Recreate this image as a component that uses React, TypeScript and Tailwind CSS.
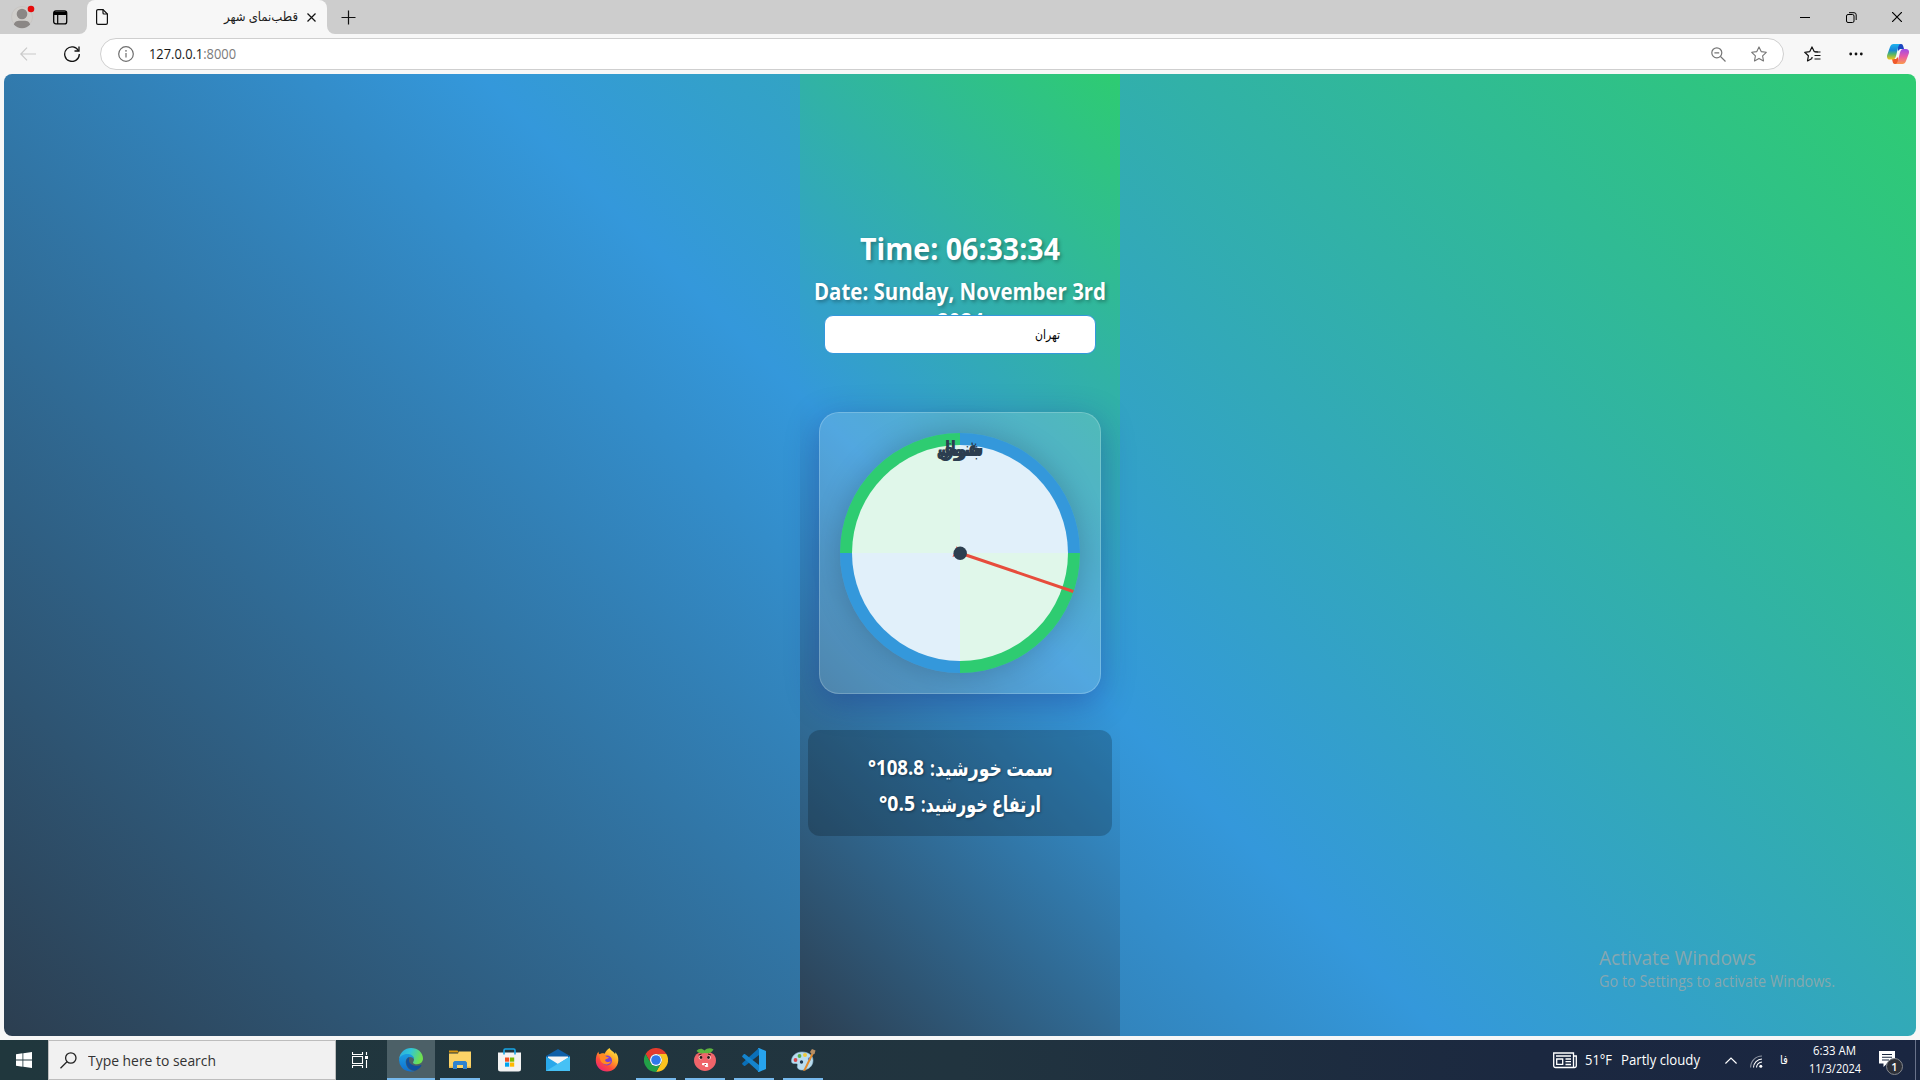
import React, { useLayoutEffect, useRef, useState } from "react";

/* Text stretched horizontally so that it fills the width of its box. */
function Fit({ className, children, rtl }: { className: string; children: React.ReactNode; rtl?: boolean }) {
  const box = useRef<HTMLDivElement>(null);
  const text = useRef<HTMLSpanElement>(null);
  const [scale, setScale] = useState(1);
  useLayoutEffect(() => {
    if (box.current && text.current && text.current.offsetWidth) {
      setScale(box.current.clientWidth / text.current.getBoundingClientRect().width);
    }
  }, []);
  return (
    <div ref={box} dir="ltr" className={`shrink-0 whitespace-nowrap ${className}`}>
      <span ref={text} dir={rtl ? "rtl" : "ltr"} className="inline-block origin-left" style={{ transform: `scaleX(${scale})` }}>
        {children}
      </span>
    </div>
  );
}

function TabBar() {
  return (
    <div className="flex h-[34px] w-full bg-[#cdcdcd]">
      <div className="flex w-[87px] shrink-0 items-center bg-[#f7f7f7]">
        <div className="flex h-full w-full items-center rounded-br-lg bg-[#cdcdcd] pl-[11px]">
          <svg width="24" height="24" viewBox="0 0 24 24">
            <circle cx="11" cy="12" r="10.5" fill="#d0cecb" stroke="#c2c0bd" strokeWidth=".6" />
            <circle cx="11" cy="9" r="5.3" fill="#8b8785" />
            <path d="M2.8 19.5c1-3.5 3.6-3.8 8.2-3.8s7.2.3 8.2 3.8a11 11 0 0 1-16.4 0z" fill="#8b8785" />
            <circle cx="20" cy="4" r="3.3" fill="#e60b0b" />
          </svg>
          <svg className="ml-[18px]" width="15" height="15" viewBox="0 0 15 15">
            <rect x=".7" y=".9" width="13" height="13" rx="2.2" fill="none" stroke="#000" strokeWidth="1.3" />
            <path d="M1 1.5h12.500V5H1z" fill="#000" />
            <path d="M4.700 4v10" stroke="#000" strokeWidth="1.2" />
          </svg>
        </div>
      </div>
      <div className="flex w-[240px] shrink-0 items-center rounded-t-lg bg-[#f7f7f7] pl-[9px]">
        <svg width="12" height="16" viewBox="0 0 12 16" fill="none" stroke="#111" strokeWidth="1.2">
          <path d="M2 .6h5L11.400 5v9a1.400 1.400 0 0 1-1.400 1.400H2A1.400 1.400 0 0 1 .6 14V2A1.400 1.400 0 0 1 2 .6z" />
          <path d="M7 .6V4a1 1 0 0 0 1 1h3.400" />
        </svg>
        <Fit rtl className="ml-[116px] w-[74px] text-[12.5px] leading-[34px] text-[#1b1b1b]">قطب‌نمای شهر</Fit>
        <svg className="ml-[9px]" width="9" height="9" viewBox="0 0 9 9" stroke="#111" strokeWidth="1.2">
          <path d="M.5.5l8 8M8.500.5l-8 8" />
        </svg>
      </div>
      <div className="flex flex-1 bg-[#f7f7f7]">
        <div className="flex flex-1 items-center rounded-bl-lg bg-[#cdcdcd] pl-[14px]">
          <svg width="15" height="15" viewBox="0 0 15 15" stroke="#111" strokeWidth="1.2">
            <path d="M7.500.5v14M.5 7.500h14" />
          </svg>
          <svg className="ml-auto" width="10" height="10" viewBox="0 0 10 10">
            <path d="M0 5.500h10" stroke="#000" />
          </svg>
          <svg className="ml-[36px]" width="11" height="11" viewBox="0 0 11 11" fill="none" stroke="#000" strokeWidth="1">
            <rect x=".5" y="2.500" width="7.500" height="8" rx="1.500" />
            <path d="M3 .7h5a2.200 2.200 0 0 1 2.200 2.200V8" />
          </svg>
          <svg className="ml-[35px] mr-[18px]" width="10" height="10" viewBox="0 0 10 10" stroke="#000" strokeWidth="1.2">
            <path d="M0 0l10 10M10 0L0 10" />
          </svg>
        </div>
      </div>
    </div>
  );
}

const STAR = "M8 .9l2.200 4.700 5.100.7-3.700 3.500.9 5.100L8 12.400l-4.500 2.500.9-5.100L.7 6.300l5.100-.7z";

function AddressBar() {
  return (
    <div className="flex h-10 w-full items-center bg-[#f7f7f7]">
      <svg className="ml-[20px]" width="16" height="14" viewBox="0 0 16 14" fill="none" stroke="#c9c9c9" strokeWidth="1.2">
        <path d="M16 7H1M7 .7L.8 7 7 13.300" />
      </svg>
      <svg className="ml-[28px]" width="16" height="16" viewBox="0 0 16 16" fill="none" stroke="#111" strokeWidth="1.3">
        <path d="M14.600 5A7.300 7.300 0 1 0 15.300 8" />
        <path d="M15 .6V5h-4.500" />
      </svg>
      <div className="ml-[20px] flex h-8 w-[1684px] items-center rounded-full border border-[#cfcfcf] bg-white">
        <svg className="ml-[17px]" width="16" height="16" viewBox="0 0 16 16">
          <circle cx="8" cy="8" r="7.3" fill="none" stroke="#6e6e6e" strokeWidth="1.2" />
          <path d="M8 7v4.500" stroke="#6e6e6e" strokeWidth="1.2" />
          <circle cx="8" cy="4.8" r=".85" fill="#6e6e6e" />
        </svg>
        <Fit className="ml-[15px] w-[87px] text-[14.5px] leading-[30px] text-[#1b1b1b]">
          127.0.0.1<span className="text-[#7b7b7b]">:8000</span>
        </Fit>
        <svg className="ml-auto" width="15" height="15" viewBox="0 0 15 15" fill="none" stroke="#767676" strokeWidth="1.2">
          <circle cx="5.8" cy="5.8" r="5" />
          <path d="M3.400 5.800h4.800M9.500 9.500l5 5" />
        </svg>
        <svg className="ml-[25px] mr-[16px]" width="16" height="16" viewBox="0 0 16 16" fill="none" stroke="#767676" strokeWidth="1.1" strokeLinejoin="round">
          <path d={STAR} />
        </svg>
      </div>
      <svg className="ml-[20px]" width="17" height="16" viewBox="0 0 17 16" fill="none" stroke="#111" strokeWidth="1.2" strokeLinejoin="round">
        <path d="M14 6l-3.800-.5L8 .9 5.800 5.600.7 6.300l3.700 3.500-.9 5.100L8 12.400" />
        <path d="M10.500 6H16.500M10.500 9.500h6M10.500 13h6M8 12.400V11" />
      </svg>
      <svg className="ml-[28px]" width="14" height="4" viewBox="0 0 14 4" fill="#111">
        <circle cx="1.7" cy="2" r="1.4" />
        <circle cx="7" cy="2" r="1.4" />
        <circle cx="12.3" cy="2" r="1.4" />
      </svg>
      <svg className="ml-[24px]" width="22" height="20" viewBox="0 0 22 20">
        <defs>
          <linearGradient id="cpA" x1="0" y1="0" x2="0" y2="1">
            <stop offset="0" stopColor="#1fb3ee" /><stop offset=".4" stopColor="#1787d8" /><stop offset=".65" stopColor="#52b56b" /><stop offset="1" stopColor="#f6c619" />
          </linearGradient>
          <linearGradient id="cpB" x1="0" y1="0" x2="0" y2="1">
            <stop offset="0" stopColor="#9d4be8" /><stop offset=".5" stopColor="#e85aa6" /><stop offset="1" stopColor="#fb9a4c" />
          </linearGradient>
        </defs>
        <path d="M11 0h3c2 0 2.300 2 3 5h-4l-2 2z" fill="#1b47c0" />
        <path d="M11 20H8c-2 0-2.300-2-3-5h4l2-2z" fill="#f0592b" />
        <path d="M6.500 0H14c-1.800 0-2.300 1.500-3 4L9 12c-.7 2.300-1.300 3.500-3.500 3.500H3c-2.500 0-3.500-2-2.800-4.500L3 3C3.700 1 4.800 0 6.500 0z" fill="url(#cpA)" />
        <path d="M15.500 20H8c1.800 0 2.300-1.500 3-4l2-7.500C13.700 6.200 14.300 5 16.500 5H19c2.500 0 3.500 2 2.800 4.500L19 17c-.7 2-1.800 3-3.500 3z" fill="url(#cpB)" />
      </svg>
    </div>
  );
}

const DIRECTIONS = ["شمال", "شرق", "جنوب", "غرب"];

function Compass() {
  return (
    <div className="mt-[58px] flex size-[282px] shrink-0 items-center justify-center rounded-[20px] border border-white/20 bg-white/15 shadow-[0_8px_32px_rgba(31,38,135,0.37)]">
      <div className="relative size-60 rounded-full bg-[conic-gradient(#3498db_0_25%,#2ecc71_25%_50%,#3498db_50%_75%,#2ecc71_75%)] p-3 shadow-[0_0_30px_rgba(0,0,0,0.2)]">
        <div className="size-full rounded-full bg-white/85" />
        {DIRECTIONS.map((d) => (
          <span key={d} className="absolute left-1/2 top-[1px] -translate-x-1/2 scale-x-[.78] text-[21px] font-bold leading-7 text-[#2c3e50]">
            {d}
          </span>
        ))}
        <svg className="absolute inset-0" width="240" height="240" viewBox="0 0 240 240">
          <path d="M120 120L233.300 158.500" stroke="#e74c3c" strokeWidth="3" />
          <path d="M116.800 113L112.500 124l8-3z" fill="#e74c3c" />
          <circle cx="120.200" cy="120.300" r="6.700" fill="#2c3e50" />
        </svg>
      </div>
    </div>
  );
}

function Reading({ label, value, labelWidth, valueWidth }: { label: string; value: string; labelWidth: string; valueWidth: string }) {
  return (
    <div className="flex gap-[6px]" dir="ltr">
      <Fit rtl className={`text-[21px] ${valueWidth}`}>{`${value}\u200f°`}</Fit>
      <Fit rtl className={`text-[22px] ${labelWidth}`}>{label}</Fit>
    </div>
  );
}

function Page() {
  return (
    <div className="mx-1 flex h-[962px] justify-center overflow-hidden rounded-lg bg-[linear-gradient(45deg,#2c3e50,#3498db,#2ecc71)]">
      <div className="w-[796px] shrink-0" />
      <main className="flex h-full w-[320px] shrink-0 flex-col items-center bg-[linear-gradient(45deg,#2c3e50,#3498db,#2ecc71)] pt-[157px] font-bold text-white">
        <Fit className="w-[200px] text-[30px] leading-9 [text-shadow:2px_2px_4px_rgba(0,0,0,0.3)]">Time: 06:33:34</Fit>
        <div className="mt-[10px] flex h-[38px] w-full flex-col items-center text-[22.4px] leading-[30px] [text-shadow:2px_2px_4px_rgba(0,0,0,0.3)]">
          <Fit className="w-[292px]">Date: Sunday, November 3rd</Fit>
          <Fit className="w-[47px]">2024</Fit>
        </div>
        <div className="relative flex h-[39px] w-[272px] shrink-0 items-center justify-end rounded-[9px] border border-[#3498db] bg-white pr-[35px] font-normal text-black">
          <Fit rtl className="w-[25px] pb-[2px] text-[13px] leading-8">تهران</Fit>
        </div>
        <Compass />
        <div className="mt-[36px] flex h-[106px] w-[304px] shrink-0 flex-col items-center rounded-xl bg-black/20 pt-[19px] leading-9 [text-shadow:1px_1px_3px_rgba(0,0,0,0.4)]">
          <Reading label="سمت خورشید:" value="108.8" labelWidth="w-[123px]" valueWidth="w-[56px]" />
          <Reading label="ارتفاع خورشید:" value="0.5" labelWidth="w-[120px]" valueWidth="w-[36px]" />
        </div>
      </main>
      <div className="flex w-[796px] shrink-0 flex-col items-start justify-end pb-[45px] pl-[479px] text-[#a3a9a8]/75">
        <Fit className="w-[157px] text-[20px] leading-[27px]">Activate Windows</Fit>
        <Fit className="w-[236px] text-[15.5px] leading-5">Go to Settings to activate Windows.</Fit>
      </div>
    </div>
  );
}

const EdgeIcon = () => (
  <svg width="24" height="24" viewBox="0 0 24 24">
    <defs>
      <linearGradient id="eg1" x1="0" y1="0" x2="1" y2=".3"><stop offset="0" stopColor="#2aa9e0" /><stop offset=".5" stopColor="#31c6d8" /><stop offset="1" stopColor="#6fe04f" /></linearGradient>
      <linearGradient id="eg2" x1="0" y1="0" x2="0" y2="1"><stop offset="0" stopColor="#1b9de2" /><stop offset="1" stopColor="#1170cf" /></linearGradient>
    </defs>
    <path d="M0 11C.8 4.500 6 0 12 0c7 0 12 4.800 12 10.500 0 3.500-2.500 5.700-6 5.700-2.500 0-4-.8-4-1.800 0-.8 1-1.200 1-3C15 8.500 12 7 8.500 7 4.500 7 1 9 0 11z" fill="url(#eg1)" />
    <path d="M0 12c0-3.500 4-6 8.300-6C12 6 15 8 15 11c-1-1.300-2.200-2-4-2-3 0-5 3-4 7 .8 4 4 7 8.500 7C13.500 24 6 24 2.500 19A12 12 0 0 1 0 12z" fill="url(#eg2)" />
    <path d="M9.500 9.500C7 11 6.500 14 8 17.500c1.500 3.500 5 5.500 8 5.200 2.500-.8 5-2.700 6.300-5 .3-.6-.1-.8-.6-.6-4 1.900-9.200.4-11-2.400-1-1.700-1.100-3.500-.2-5.200z" fill="#104f9e" />
  </svg>
);

const FolderIcon = () => (
  <svg width="22" height="22" viewBox="0 0 22 22">
    <path d="M0 1.500h8.500l1.500 2H0z" fill="#d9980f" />
    <path d="M0 4.500h9l1-2h12V19H0z" fill="#fbd367" />
    <path d="M4 20v-6.500L5.500 12h11l1.500 1.500V20h-4v-4H8v4z" fill="#2f83cf" />
    <path d="M0 17.500h4V19H0zM18 17.500h4V19h-4z" fill="#e9b84a" />
  </svg>
);

const StoreIcon = () => (
  <svg width="23" height="24" viewBox="0 0 23 24">
    <path d="M0 4.500h23V21a2.500 2.500 0 0 1-2.500 2.500h-18A2.500 2.500 0 0 1 0 21z" fill="#f3f3f3" />
    <path d="M6 6.500V2.200C6 1.500 6.500 1 7.200 1h8.600c.7 0 1.200.5 1.200 1.200v4.300" fill="none" stroke="#17a7e8" strokeWidth="1.6" />
    <path d="M7 9.500h4.200v4.200H7z" fill="#f25022" /><path d="M12 9.500h4.200v4.200H12z" fill="#7fba00" />
    <path d="M7 14.500h4.200v4.200H7z" fill="#00a4ef" /><path d="M12 14.500h4.200v4.200H12z" fill="#ffb900" />
  </svg>
);

const MailIcon = () => (
  <svg width="24" height="24" viewBox="0 0 24 24">
    <path d="M0 8l12-7 12 7v4H0z" fill="#0f5fa8" />
    <path d="M2 8.500h20V16H2z" fill="#f5f5f5" />
    <path d="M0 8.500l12 7.500 12-7.500V23H0z" fill="#29a8ea" />
    <path d="M24 8.500L0 23h24z" fill="#46c1f5" />
  </svg>
);

const FirefoxIcon = () => (
  <svg width="24" height="24" viewBox="0 0 24 24">
    <defs>
      <linearGradient id="ff" x1=".9" y1="0" x2=".2" y2="1"><stop offset="0" stopColor="#fff04a" /><stop offset=".4" stopColor="#ffa426" /><stop offset=".7" stopColor="#ff4a3c" /><stop offset="1" stopColor="#e8217c" /></linearGradient>
    </defs>
    <path d="M14.500 0c1 2.500 4 3.500 5.500 6 .5-.5.3-1.500 0-2 2.500 2 3.500 5 3.300 8.500C23 19 18 23.500 12 23.500S.8 19 .8 12.500C.8 9.500 1.500 6 3.500 3.500c0 1.300.3 2.200 1 2.800C6 5.300 8 5 9.500 5.700 11 3.500 12 1.500 14.500 0z" fill="url(#ff)" />
    <circle cx="12" cy="12.500" r="5" fill="#7a3fd6" />
    <path d="M4.500 6.500c2.500-1.500 5-.5 6.500 2 1 .5 2 .5 3 .8-1 1.700-2.500 1.500-3.500 2.200-.8.6-.3 2.200 1.500 2.500 2.200.3 3-1 4-.8-1 3-4.500 4-7 2.800-3.500-1.500-4.500-5.500-4.500-9.500z" fill="#ff8a22" />
  </svg>
);

const ChromeIcon = () => (
  <svg width="24" height="24" viewBox="0 0 24 24">
    <path d="M1.600 6A12 12 0 0 1 22.400 6H12a6 6 0 0 0-5.200 9z" fill="#e33b2e" />
    <path d="M22.400 6A12 12 0 0 1 12 24l5.200-9A6 6 0 0 0 12 6z" fill="#fcc31e" />
    <path d="M12 24A12 12 0 0 1 1.600 6l5.200 9a6 6 0 0 0 10.400 0z" fill="#22a047" />
    <circle cx="12" cy="12" r="6" fill="#fff" />
    <circle cx="12" cy="12" r="4.800" fill="#2f78ea" />
  </svg>
);

const BerryIcon = () => (
  <svg width="24" height="24" viewBox="0 0 24 24">
    <path d="M12 3.500c5 0 11 2 11 9 0 6-6 10.500-11 10.500S1 18.500 1 12.500c0-7 6-9 11-9z" fill="#f0646a" />
    <path d="M12 5C9 6 6 5.500 3.500 3 6 0 9 0 11.500 2.500 14 0 17.500-.5 20.500 1.500 18.500 5 15 6 12 5z" fill="#5db33f" />
    <circle cx="7.500" cy="9.500" r="1.900" fill="#f7c9c9" /><circle cx="16" cy="9.500" r="1.900" fill="#f7c9c9" />
    <circle cx="8" cy="9.500" r="1.400" fill="#2a1a1a" /><circle cx="15.500" cy="9.500" r="1.400" fill="#2a1a1a" />
    <path d="M5.500 7l3-1M18 7l-3-1" stroke="#4a1c1c" />
    <path d="M10 16.200h4M13 18h1.200" stroke="#fff" strokeWidth="2.200" strokeLinecap="round" />
    <path d="M11.500 16.500h1.500" stroke="#b9363f" />
  </svg>
);

const CodeIcon = () => (
  <svg width="24" height="24" viewBox="0 0 24 24">
    <path d="M17 0v7L3.200 17.700c-.4.3-.9.3-1.300 0L.4 16.300c-.4-.4-.4-1 0-1.400z" fill="#0a6fb8" />
    <path d="M17 24v-7L3.200 6.300c-.4-.3-.9-.3-1.300 0L.4 7.700c-.4.4-.4 1 0 1.400z" fill="#1484cd" />
    <path d="M17 0l7 3v18l-7 3c-.6-.1-.9-.3-1.200-.6l1.200-1V1.600l-1.200-1c.3-.3.7-.5 1.200-.6z" fill="#27a3ee" />
  </svg>
);

const PaintIcon = () => (
  <svg width="25" height="24" viewBox="0 0 25 24">
    <path d="M11 4C5 4 .5 8 .5 13c0 2 1.500 2.800 3.500 2.500 2-.4 3 .5 2.500 2-.8 2.500 1 4.500 5 4.500 6 0 10.500-4 10.500-9.500C22 7 17 4 11 4z" fill="#b9dcef" stroke="#8fbdd8" strokeWidth=".6" />
    <circle cx="4.500" cy="12" r="1.900" fill="#d8474b" /><circle cx="8.500" cy="8" r="1.900" fill="#59b04b" />
    <circle cx="14" cy="7" r="2" fill="#f0c93b" /><circle cx="10.500" cy="14" r="1.700" fill="#1d3850" /><circle cx="18.500" cy="11" r="1.700" fill="#4a7fd0" />
    <path d="M20.500 5.500L12 23l2.500-.5L22.500 6z" fill="#e38a2b" />
    <path d="M19 4l2-3 3.500 1.500L23.500 6l-2.500.5z" fill="#b98f63" />
  </svg>
);

const APPS: { icon: React.ReactNode; open: boolean }[] = [
  { icon: <FolderIcon />, open: true },
  { icon: <StoreIcon />, open: false },
  { icon: <MailIcon />, open: false },
  { icon: <FirefoxIcon />, open: false },
  { icon: <ChromeIcon />, open: true },
  { icon: <BerryIcon />, open: true },
  { icon: <CodeIcon />, open: true },
  { icon: <PaintIcon />, open: true },
];

function Taskbar() {
  return (
    <div className="flex h-10 w-full items-center bg-[linear-gradient(90deg,#20373d,#21343f_50%,#1b2840_80%,#1a2641)] text-white">
      <div className="flex w-12 shrink-0 justify-center">
        <svg width="16" height="16" viewBox="0 0 16 16" fill="#fff">
          <path d="M0 2.200L6.500 1.300v6.300H0zM7.300 1.200L16 0v7.600H7.300zM0 8.400h6.500v6.300L0 13.800zM7.300 8.400H16V16l-8.700-1.200z" />
        </svg>
      </div>
      <div className="flex h-10 w-[288px] shrink-0 items-center border border-[#bdbdbd] bg-[#f1f1f1] pl-[11px]">
        <svg width="17" height="17" viewBox="0 0 17 17" fill="none" stroke="#222" strokeWidth="1.3">
          <circle cx="10.8" cy="6" r="5.2" />
          <path d="M7 9.800L.5 16.300" />
        </svg>
        <Fit className="ml-[11px] w-[128px] text-[15px] leading-[38px] text-[#333]">Type here to search</Fit>
      </div>
      <svg className="ml-[16px]" width="16" height="16" viewBox="0 0 16 16" fill="none" stroke="#fff" strokeWidth="1.1">
        <path d="M.5 0v2.500h10V0M.5 16v-2.500h10V16M.5 4.500h10v7H.5zM14.500 0v3M14.500 8v8" />
        <path d="M13 4h3v3h-3z" fill="#fff" stroke="none" />
      </svg>
      <div className="ml-[19px] flex h-full w-12 items-center justify-center border-b-2 border-[#76b9ed] bg-[#4c6067] pt-[2px]">
        <EdgeIcon />
      </div>
      {APPS.map((app, i) => (
        <div key={i} className="ml-px flex h-full w-12 shrink-0 flex-col items-center">
          <div className="flex h-[38px] items-center pt-[2px]">{app.icon}</div>
          {app.open && <div className="h-[2px] w-10 bg-[#76b9ed]" />}
        </div>
      ))}
      <svg className="ml-auto" width="24" height="17" viewBox="0 0 24 17" fill="none" stroke="#fff" strokeWidth="1.3">
        <path d="M20.500 15.500h-18A1.800 1.800 0 0 1 .7 13.700V1h19.800v14.500h1a1.800 1.800 0 0 0 1.800-1.800V4h-2.800" />
        <path d="M3 4h15M12.500 7H18M12.500 9.700H18M12.500 12.500H18M3.700 7h6v5.300h-6z" />
      </svg>
      <Fit className="ml-[8px] w-[27px] text-[14px] leading-10">51°F</Fit>
      <Fit className="ml-[9px] w-[79px] text-[14px] leading-10">Partly cloudy</Fit>
      <svg className="ml-[25px]" width="12" height="7" viewBox="0 0 12 7" fill="none" stroke="#fff" strokeWidth="1.2">
        <path d="M.4 6.500L6 1l5.600 5.500" />
      </svg>
      <svg className="ml-[13px] mt-[3px]" width="13" height="13" viewBox="0 0 13 13" fill="none" stroke="#fff" strokeWidth="1.1">
        <path d="M.6 12.500A11.500 11.500 0 0 1 12 1" opacity=".5" />
        <path d="M3.500 12.500A8.700 8.700 0 0 1 12 4M6.500 12.500A5.700 5.700 0 0 1 12 7" />
        <circle cx="10.8" cy="11.3" r="1.5" fill="#fff" stroke="none" />
      </svg>
      <Fit rtl className="ml-[17px] w-[8px] text-[12px] leading-10">فا</Fit>
      <div className="ml-[20px] flex w-[53px] flex-col items-center text-[12px] leading-[18px]">
        <Fit className="w-[43px]">6:33 AM</Fit>
        <Fit className="w-[52px]">11/3/2024</Fit>
      </div>
      <svg className="ml-[18px] mt-[6px]" width="25" height="26" viewBox="0 0 25 26">
        <path d="M0 1h16v12.500H8L4.500 17v-3.500H0z" fill="#fff" />
        <path d="M3 4.500h10M3 7.200h10M3 10h7" stroke="#1b2840" strokeWidth="1.1" />
        <circle cx="15.500" cy="16.500" r="8" fill="#2d3038" stroke="#85888e" strokeWidth="1" />
        <text x="15.500" y="20.500" fill="#fff" fontSize="11" fontWeight="600" textAnchor="middle">1</text>
      </svg>
      <div className="ml-[11px] mr-1 h-full w-px bg-[#69728a]" />
    </div>
  );
}

export default function App() {
  return (
    <div className="h-[1080px] w-[1920px] overflow-hidden bg-[#f7f7f7] font-['Open_Sans','Noto_Sans','DejaVu_Sans',sans-serif]">
      <TabBar />
      <AddressBar />
      <Page />
      <div className="h-1" />
      <Taskbar />
    </div>
  );
}
